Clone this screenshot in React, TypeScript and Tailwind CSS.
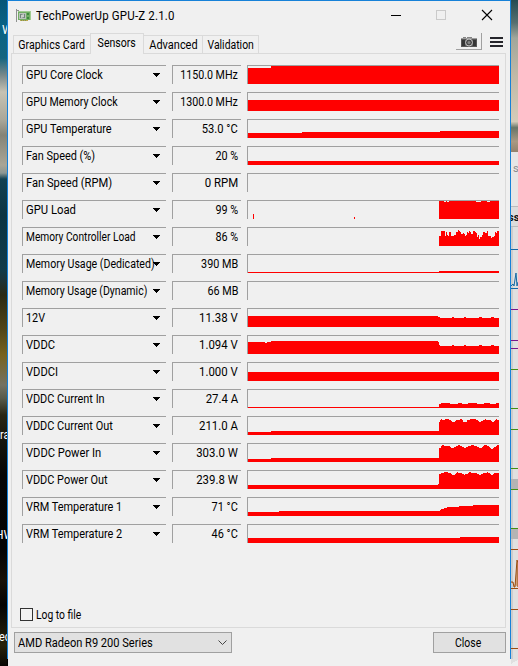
import React from "react";

// Each graph is a list of [start x, height] steps; a step holds until the next one.
type Step = [number, number];
const LEFT = 248;
const RIGHT = 499;

const run = (start: number, heights: number[]): Step[] =>
  heights.map((h, i) => [start + i, h] as Step);

const memLoad = [
  10, 10, 15, 15, 15, 15, 10, 14, 11, 10, 14, 14, 10, 10, 10, 11, 11, 14, 14, 16,
  15, 14, 12, 12, 13, 12, 10, 11, 14, 13, 15, 14, 12, 12, 15, 15, 14, 13, 9, 11,
  7, 9, 9, 11, 14, 14, 13, 13, 15, 10, 10, 10, 8, 9, 9, 10, 14, 13, 15, 15,
];
const curOut = [
  13, 15, 16, 15, 15, 15, 16, 16, 16, 16, 15, 15, 14, 13, 13, 13, 14, 15, 15, 15,
  15, 16, 16, 15, 13, 13, 13, 13, 15, 15, 15, 16, 16, 16, 16, 16, 16, 15, 15, 14,
  13, 13, 14, 14, 15, 15, 16, 15, 15, 15, 15, 15, 14, 13, 13, 14, 15, 16, 15, 15,
];
const powIn = [
  14, 14, 16, 17, 17, 16, 16, 16, 16, 16, 16, 15, 14, 14, 14, 15, 15, 16, 16, 17,
  17, 16, 16, 15, 15, 14, 14, 15, 15, 16, 16, 16, 17, 17, 17, 16, 16, 16, 15, 15,
  14, 14, 14, 15, 16, 17, 17, 17, 16, 16, 15, 14, 13, 13, 14, 15, 15, 16, 17, 17,
];
const powOut = [
  15, 15, 16, 16, 16, 17, 17, 17, 17, 16, 16, 16, 15, 14, 14, 14, 15, 16, 17, 16,
  16, 16, 16, 15, 15, 14, 15, 15, 15, 16, 17, 17, 16, 16, 16, 16, 16, 16, 15, 15,
  14, 14, 15, 15, 16, 16, 16, 16, 17, 16, 16, 15, 14, 14, 15, 16, 16, 16, 16, 16,
];

// name and value each carry their own horizontal condensing.
const rows: { name: string; ns: string; value: string; vs: string; steps: Step[] }[] = [
  { name: "GPU Core Clock", ns: "scale-x-[0.91]", value: "1150.0 MHz", vs: "scale-x-[0.89]", steps: [[248, 16], [271, 18]] },
  { name: "GPU Memory Clock", ns: "scale-x-[0.885]", value: "1300.0 MHz", vs: "scale-x-[0.89]", steps: [[248, 11]] },
  { name: "GPU Temperature", ns: "scale-x-[0.91]", value: "53.0 °C", vs: "scale-x-[0.93]", steps: [[248, 5], [302, 6], [440, 7]] },
  { name: "Fan Speed (%)", ns: "scale-x-[0.91]", value: "20 %", vs: "scale-x-[0.9]", steps: [[248, 4]] },
  { name: "Fan Speed (RPM)", ns: "scale-x-[0.93]", value: "0 RPM", vs: "scale-x-[0.95]", steps: [] },
  {
    name: "GPU Load", ns: "scale-x-[0.94]", value: "99 %", vs: "scale-x-[0.9]",
    steps: [[253, 5], [254, 0], [354, 2], [355, 0], [439, 18], [444, 17], [446, 18], [447, 17], [449, 18], [476, 17], [481, 18], [487, 17], [490, 18]],
  },
  { name: "Memory Controller Load", ns: "scale-x-[0.85]", value: "86 %", vs: "scale-x-[0.9]", steps: run(439, memLoad) },
  { name: "Memory Usage (Dedicated)", ns: "scale-x-[0.883]", value: "390 MB", vs: "scale-x-[0.9]", steps: [[248, 1], [439, 2]] },
  { name: "Memory Usage (Dynamic)", ns: "scale-x-[0.877]", value: "66 MB", vs: "scale-x-[0.9]", steps: [] },
  {
    name: "12V", ns: "scale-x-[0.9]", value: "11.38 V", vs: "scale-x-[0.95]",
    steps: [[248, 11], [438, 10], [440, 9], [452, 10], [454, 9], [464, 10], [466, 9], [479, 10], [482, 9], [491, 10], [494, 9]],
  },
  {
    name: "VDDC", ns: "scale-x-[0.93]", value: "1.094 V", vs: "scale-x-[0.95]",
    steps: [[248, 12], [265, 11], [267, 12], [271, 13], [438, 12], [439, 9], [440, 8], [452, 9], [454, 8], [464, 9], [466, 8], [479, 9], [482, 8], [491, 9], [494, 8]],
  },
  { name: "VDDCI", ns: "scale-x-[0.93]", value: "1.000 V", vs: "scale-x-[0.95]", steps: [[248, 9]] },
  {
    name: "VDDC Current In", ns: "scale-x-[0.91]", value: "27.4 A", vs: "scale-x-[0.95]",
    steps: [[248, 1], [439, 4], [441, 5], [450, 4], [458, 5], [462, 4], [468, 5], [477, 4], [484, 5], [490, 4], [496, 5]],
  },
  { name: "VDDC Current Out", ns: "scale-x-[0.91]", value: "211.0 A", vs: "scale-x-[0.95]", steps: [[248, 3], [271, 4], ...run(439, curOut)] },
  { name: "VDDC Power In", ns: "scale-x-[0.93]", value: "303.0 W", vs: "scale-x-[0.95]", steps: [[248, 3], [271, 4], ...run(439, powIn)] },
  { name: "VDDC Power Out", ns: "scale-x-[0.91]", value: "239.8 W", vs: "scale-x-[0.95]", steps: [[248, 4], [438, 5], ...run(439, powOut)] },
  {
    name: "VRM Temperature 1", ns: "scale-x-[0.91]", value: "71 °C", vs: "scale-x-[0.91]",
    steps: [[248, 4], [279, 5], [440, 6], [441, 7], [444, 8], [447, 9], [459, 10], [473, 11]],
  },
  { name: "VRM Temperature 2", ns: "scale-x-[0.91]", value: "46 °C", vs: "scale-x-[0.91]", steps: [[248, 5], [460, 6]] },
];

function Graph({ steps }: { steps: Step[] }) {
  return (
    <svg width="251" height="18" className="block" shapeRendering="crispEdges" fill="#ff0000">
      {steps.map(([x, h], i) => {
        const end = i + 1 < steps.length ? steps[i + 1][0] : RIGHT;
        return <rect key={i} x={x - LEFT} y={18 - h} width={end - x} height={h} />;
      })}
    </svg>
  );
}

function Tab({ label, className, textClass }: { label: string; className: string; textClass: string }) {
  return (
    <div className={"flex h-[18px] justify-center border-t border-r border-[#dadada] pt-px leading-[17px] whitespace-nowrap " + className}>
      <span className={"inline-block " + textClass}>{label}</span>
    </div>
  );
}

function LeftDesktop() {
  return (
    <div className="relative h-full w-[7px] shrink-0 overflow-hidden bg-[linear-gradient(to_bottom,#075577_0px,#096284_25px,#15657f_58px,#78888a_75px,#c6c2b3_92px,#a9a799_120px,#858477_135px,#aaa696_165px,#8b9793_173px,#124252_179px,#0b3443_215px,#113b49_270px,#1c3439_280px,#2b2a14_295px,#514619_330px,#77631f_355px,#747263_385px,#585b4b_398px,#292614_415px,#16150c_440px,#050505_475px,#040404_550px,#171108_580px,#030303_605px,#29230b_645px,#080704_666px)] text-[12px] text-white">
      <span className="absolute top-[21px] left-[2px]">W</span>
      <span className="absolute top-[426px] left-0 origin-left scale-x-[0.9]">ra</span>
      <span className="absolute top-[526px] -left-[5px]">HW</span>
      <span className="absolute top-[628px] -left-px origin-left scale-x-[0.9]">ec</span>
    </div>
  );
}

function RightDesktop() {
  return (
    <div className="h-full w-[7px] shrink-0 overflow-hidden">
      <svg width="7" height="666" shapeRendering="crispEdges">
        <defs>
          <linearGradient id="sky" x1="0" y1="0" x2="0" y2="1">
            <stop offset="0" stopColor="#254b51" />
            <stop offset="0.15" stopColor="#566f70" />
            <stop offset="0.25" stopColor="#a1a69b" />
            <stop offset="0.5" stopColor="#c1b9a7" />
            <stop offset="0.8" stopColor="#d4cbb9" />
            <stop offset="0.84" stopColor="#687568" />
            <stop offset="0.93" stopColor="#a99983" />
            <stop offset="1" stopColor="#93826d" />
          </linearGradient>
        </defs>
        <rect width="7" height="152" fill="url(#sky)" />
        <rect y="152" width="7" height="54" fill="#e6e6e6" />
        <rect y="206" width="7" height="20" fill="#dcdcdc" />
        <rect y="206" width="7" height="1" fill="#bbb" />
        <rect y="226" width="7" height="1" fill="#bbb" />
        <rect y="227" width="7" height="439" fill="#e0e0e0" />
        <rect y="227" width="2" height="432" fill="#cdcdcd" />
        <g fill="#b4b4b4">
          <rect y="479" width="7" height="10" />
          <rect y="529" width="7" height="10" />
        </g>
        <g fill="#1569a5">
          <rect y="249" width="7" height="1" />
          <rect y="288" width="7" height="1" />
        </g>
        <g fill="#7b168b">
          <rect y="309" width="7" height="1" />
          <rect y="340" width="7" height="1" />
          <rect y="348" width="7" height="1" />
        </g>
        <g fill="#458f10">
          <rect y="369" width="7" height="1" />
          <rect y="408" width="7" height="1" />
          <rect y="429" width="7" height="1" />
          <rect y="468" width="7" height="1" />
          <rect y="489" width="7" height="1" />
          <rect y="528" width="7" height="1" />
        </g>
        <g fill="#9c4d12">
          <rect y="549" width="7" height="1" />
          <rect y="588" width="7" height="1" />
          <rect y="609" width="7" height="1" />
          <rect y="648" width="7" height="1" />
        </g>
        <path d="M0 286l2-2 1 2 2-13 1 13 1-4" fill="none" stroke="#1569a5" shapeRendering="auto" />
        <path d="M0 582h2l1 5h1l2-27 1 3v24" fill="#d0a078" stroke="#9c4d12" shapeRendering="auto" />
        <path d="M1 663L7 660V666H0z" fill="#efefef" />
        <text x="2" y="172" fontSize="11" fill="#8b8b8b">s</text>
        <text x="-3" y="221" fontSize="11" fontWeight="bold" fill="#111">ss</text>
      </svg>
    </div>
  );
}

function TitleBar() {
  return (
    <div className="flex h-[32px] items-start">
      <svg width="16" height="16" viewBox="0 0 16 16" className="mt-[6px] ml-[9px] shrink-0">
        <path d="M.5 2v13M1 3.5h2" stroke="#8f9290" fill="none" />
        <path d="M2 4h13v9H2z" fill="#70ad62" />
        <path d="M2 4h13v1H2zM14 5h1v8h-1z" fill="#a0cb91" />
        <path d="M3 6h7v6H3z" fill="#b9c2ba" />
        <path d="M4 7h5v4H4z" fill="#718379" />
        <path d="M5 8l3-1v3l-3 1z" fill="#c9d0c9" />
        <path d="M11 6h2v2h-2zM11 10h2v2h-2z" fill="#3d893d" />
        <path d="M4 13h8v1H4z" fill="#c1a94f" />
        <path d="M5.5 13v1M7.500 13v1M9.500 13v1" stroke="#7d9959" />
      </svg>
      <span className="mt-[7px] ml-[4px] w-[150px] origin-left scale-x-[0.957] text-[12px] leading-[16px] tracking-[0.18px] whitespace-nowrap">TechPowerUp GPU-Z 2.1.0</span>
      <svg width="103" height="12" viewBox="0 0 103 12" className="mt-[8px] ml-auto mr-[17px]">
        <path d="M0 6.5h10" stroke="#000" shapeRendering="crispEdges" />
        <rect x="45.5" y="1.5" width="9" height="9" fill="none" stroke="#cacaca" shapeRendering="crispEdges" />
        <path d="M91 1l10 10M101 1l-10 10" stroke="#000" strokeWidth="1.1" />
      </svg>
    </div>
  );
}

export default function App() {
  return (
    <div className="flex h-[666px] w-[518px] overflow-hidden bg-black font-['Roboto','Liberation_Sans',sans-serif] text-[12px] text-black">
      <LeftDesktop />
      <main className="relative h-[666px] w-[504px] shrink-0 border-t border-[#1681d8] bg-[#f0f0f0]">
        <div className="pointer-events-none absolute top-0 left-0 h-[658px] w-[504px] border-x border-[#1681d8]" />
        <div className="pointer-events-none absolute top-[658px] left-0 h-[7px] w-px bg-black" />
        <TitleBar />
        <div className="flex h-[20px] items-end pl-[6px]">
          <Tab label="Graphics Card" className="w-[78px] border-l" textClass="scale-x-[0.885]" />
          <div className="z-10 -mb-px -ml-px flex h-[21px] w-[54px] justify-center border-x border-t border-[#dadada] bg-[#f0f0f0] leading-[19px]">
            <span className="inline-block scale-x-[0.88]">Sensors</span>
          </div>
          <Tab label="Advanced" className="w-[59px]" textClass="scale-x-[0.915]" />
          <Tab label="Validation" className="w-[56px]" textClass="scale-x-[0.87]" />
          <div className="mb-[3px] ml-auto flex h-[17px] w-[26px] items-center justify-center border-r border-b border-[#a0a0a0] pt-[3px]">
            <svg width="16" height="11" viewBox="0 0 16 11">
              <path d="M2 0h3v2H2zM6 0h5v2H6z" fill="#858585" />
              <path d="M0 1h16v9H0z" fill="#565656" />
              <path d="M0 1h16v1H0z" fill="#9b9b9b" />
              <path d="M1 3h3v6H1zM12 3h3v6h-3z" fill="#353535" />
              <circle cx="8" cy="5.500" r="3.500" fill="#484848" stroke="#c4c4c4" />
              <circle cx="8" cy="5.500" r="1.500" fill="#858585" />
            </svg>
          </div>
          <div className="mr-[8px] mb-[6px] ml-[8px] flex w-[13px] flex-col gap-[2px]">
            <i className="h-[2px] bg-[#25252b]" />
            <i className="h-[2px] bg-[#25252b]" />
            <i className="h-[2px] bg-[#25252b]" />
          </div>
        </div>
        <section className="ml-[4px] h-[575px] w-[495px] border border-[#dadada] pt-[11px] pl-[10px]">
          <div className="flex flex-col gap-[8px]">
            {rows.map((row) => (
              <div key={row.name} className="flex h-[19px] gap-[6px]">
                <div className="flex w-[144px] items-center border-t border-l border-[#a0a0a0] pl-[3px]">
                  <span className={"w-[126px] origin-left whitespace-nowrap " + row.ns}>{row.name}</span>
                  <svg width="8" height="4" viewBox="0 0 8 4" className="ml-px shrink-0" shapeRendering="crispEdges">
                    <path d="M0 0h7v1H0zM1 1h5v1H1zM2 2h3v1H2zM3 3h1v1H3z" />
                  </svg>
                </div>
                <div className="flex w-[69px] justify-end border-t border-l border-[#a0a0a0] pr-[3px] leading-[18px] whitespace-nowrap">
                  <span className={"inline-block origin-right " + row.vs}>{row.value}</span>
                </div>
                <div className="w-[252px] border-t border-l border-[#a0a0a0]">
                  <Graph steps={row.steps} />
                </div>
              </div>
            ))}
          </div>
          <label className="mt-[65px] -ml-[2px] flex h-[13px] items-center gap-[3px]">
            <span className="h-[13px] w-[13px] border border-[#333] bg-white/20" />
            <span className="origin-left scale-x-[0.86]">Log to file</span>
          </label>
        </section>
        <footer className="mt-[4px] flex h-[21px] justify-between pr-[5px] pl-[7px]">
          <div className="flex w-[218px] items-center justify-between border border-[#a0a0a0] bg-[#e1e1e1] pr-[4px] pl-[3px]">
            <span className="origin-left scale-x-[0.923]">AMD Radeon R9 200 Series</span>
            <svg width="9" height="6" viewBox="0 0 9 6" fill="none" stroke="#444">
              <path d="M.5.5l4 4 4-4" />
            </svg>
          </div>
          <button className="flex w-[73px] justify-center border border-[#a0a0a0] bg-[#e1e1e1] pr-[2px] leading-[20px]">
            <span className="inline-block scale-x-[0.87]">Close</span>
          </button>
        </footer>
      </main>
      <RightDesktop />
    </div>
  );
}
